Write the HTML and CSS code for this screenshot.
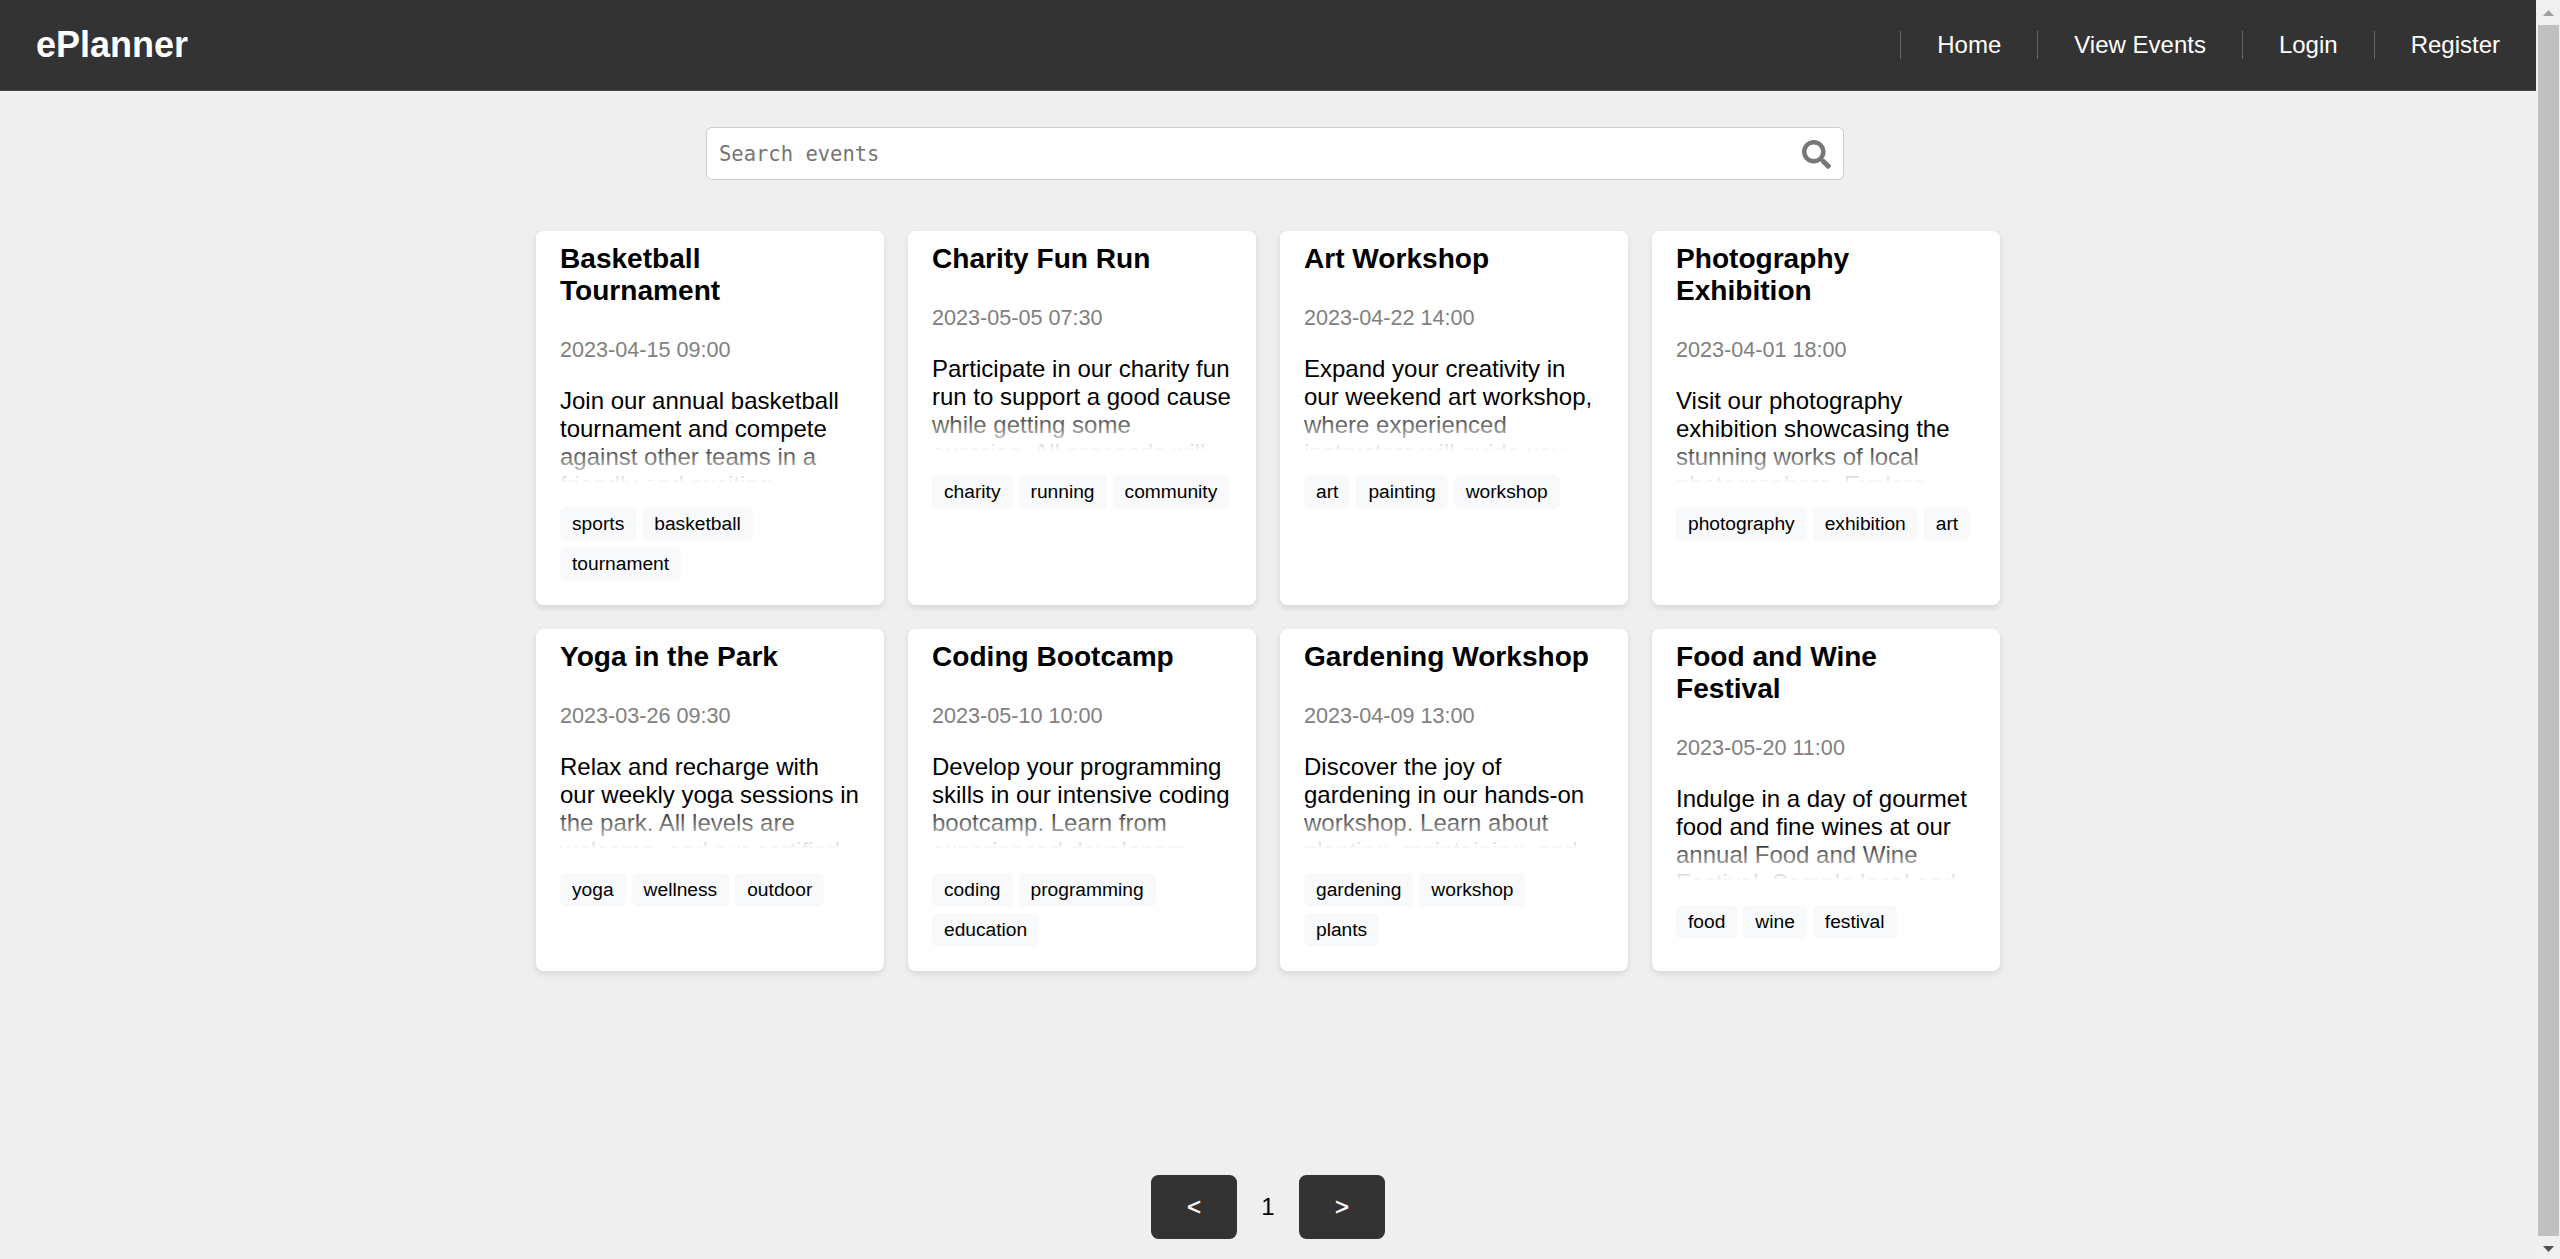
FILE: index.html
```html
<!DOCTYPE html>
<html lang="en">
<head>
<meta charset="utf-8">
<title>ePlanner</title>
<link rel="stylesheet" href="styles.css">
</head>
<body>
<div class="page">
  <header class="header">
    <h1 class="logo">ePlanner</h1>
    <nav class="nav">
      <a class="nav-link">Home</a>
      <a class="nav-link">View Events</a>
      <a class="nav-link">Login</a>
      <a class="nav-link">Register</a>
    </nav>
  </header>
  <main class="main">
    <div class="search">
      <input class="search-input" type="text" placeholder="Search events">
      <svg class="search-icon" viewBox="0 0 512 512"><path fill="currentColor" d="M505 442.700L405.300 343c-4.500-4.500-10.600-7-17-7H372c27.600-35.300 44-79.700 44-128C416 93.100 322.900 0 208 0S0 93.100 0 208s93.100 208 208 208c48.300 0 92.700-16.400 128-44v16.300c0 6.400 2.500 12.500 7 17l99.700 99.700c9.400 9.400 24.600 9.400 33.900 0l28.300-28.300c9.400-9.400 9.400-24.600.1-34zM208 336c-70.700 0-128-57.200-128-128 0-70.700 57.200-128 128-128 70.700 0 128 57.200 128 128 0 70.700-57.200 128-128 128z"/></svg>
    </div>
    <section class="events">
      <article class="card">
        <h3 class="title">Basketball Tournament</h3>
        <p class="date">2023-04-15 09:00</p>
        <p class="desc">Join our annual basketball tournament and compete against other teams in a friendly and exciting</p>
        <div class="tags"><span class="tag">sports</span><span class="tag">basketball</span><span class="tag">tournament</span></div>
      </article>
      <article class="card">
        <h3 class="title">Charity Fun Run</h3>
        <p class="date">2023-05-05 07:30</p>
        <p class="desc">Participate in our charity fun run to support a good cause while getting some exercise. All proceeds will</p>
        <div class="tags"><span class="tag">charity</span><span class="tag">running</span><span class="tag">community</span></div>
      </article>
      <article class="card">
        <h3 class="title">Art Workshop</h3>
        <p class="date">2023-04-22 14:00</p>
        <p class="desc">Expand your creativity in our weekend art workshop, where experienced instructors will guide you</p>
        <div class="tags"><span class="tag">art</span><span class="tag">painting</span><span class="tag">workshop</span></div>
      </article>
      <article class="card">
        <h3 class="title">Photography Exhibition</h3>
        <p class="date">2023-04-01 18:00</p>
        <p class="desc">Visit our photography exhibition showcasing the stunning works of local photographers. Explore</p>
        <div class="tags"><span class="tag">photography</span><span class="tag">exhibition</span><span class="tag">art</span></div>
      </article>
      <article class="card">
        <h3 class="title">Yoga in the Park</h3>
        <p class="date">2023-03-26 09:30</p>
        <p class="desc">Relax and recharge with our weekly yoga sessions in the park. All levels are welcome, and our certified</p>
        <div class="tags"><span class="tag">yoga</span><span class="tag">wellness</span><span class="tag">outdoor</span></div>
      </article>
      <article class="card">
        <h3 class="title">Coding Bootcamp</h3>
        <p class="date">2023-05-10 10:00</p>
        <p class="desc">Develop your programming skills in our intensive coding bootcamp. Learn from experienced developers</p>
        <div class="tags"><span class="tag">coding</span><span class="tag">programming</span><span class="tag">education</span></div>
      </article>
      <article class="card">
        <h3 class="title">Gardening Workshop</h3>
        <p class="date">2023-04-09 13:00</p>
        <p class="desc">Discover the joy of gardening in our hands-on workshop. Learn about planting, maintaining, and</p>
        <div class="tags"><span class="tag">gardening</span><span class="tag">workshop</span><span class="tag">plants</span></div>
      </article>
      <article class="card">
        <h3 class="title">Food and Wine Festival</h3>
        <p class="date">2023-05-20 11:00</p>
        <p class="desc">Indulge in a day of gourmet food and fine wines at our annual Food and Wine Festival. Sample local and</p>
        <div class="tags"><span class="tag">food</span><span class="tag">wine</span><span class="tag">festival</span></div>
      </article>
    </section>
    <div class="pagination">
      <button class="page-button">&lt;</button>
      <span class="page-number">1</span>
      <button class="page-button">&gt;</button>
    </div>
  </main>
</div>
<div class="scrollbar">
  <svg class="arrow arrow-up" viewBox="0 0 11 6"><path d="M5.500 0L11 6H0z"/></svg>
  <div class="thumb"></div>
  <svg class="arrow arrow-down" viewBox="0 0 11 6"><path d="M0 0h11L5.500 6z"/></svg>
</div>
</body>
</html>
```
FILE: styles.css
```css
* {
  box-sizing: border-box;
  margin: 0;
}

body {
  display: flex;
  height: 1259px;
  overflow: hidden;
  background: #efefef;
  color: #000;
  font: 24px/28px "Liberation Sans", Arial, sans-serif;
}

.page {
  display: flex;
  flex-direction: column;
  width: 2536px;
}

.header {
  display: flex;
  align-items: center;
  justify-content: space-between;
  height: 91px;
  padding-left: 36px;
  background: #333;
  border-bottom: 1px solid #444;
  color: #fff;
}

.logo {
  padding-bottom: 2px;
  font-size: 36px;
  line-height: 41px;
}

.nav {
  display: flex;
}

.nav-link {
  padding: 0 36px;
  border-left: 1px solid #666;
}

.main {
  display: flex;
  flex: 1;
  flex-direction: column;
  align-items: center;
  padding: 36px 0 20px;
}

.search {
  display: flex;
  align-items: center;
  width: 1138px;
  height: 53px;
  margin-left: 14px;
  padding: 0 12px;
  background: #fff;
  border: 1px solid #ccc;
  border-radius: 6px;
}

.search-input {
  flex: 1;
  padding: 0;
  background: none;
  border: 0;
  outline: 0;
  font: 20.5px "DejaVu Sans Mono", monospace;
}

.search-input::placeholder {
  color: #757575;
}

.search-icon {
  width: 29px;
  height: 29px;
  margin-top: 2px;
  color: #777;
}

.events {
  display: grid;
  grid-template-columns: repeat(4, 348px);
  gap: 24px;
  margin-top: 51px;
}

.card {
  padding: 12px 24px 24px;
  background: #fff;
  border-radius: 7.5px;
  box-shadow: 0 3px 6px rgba(0, 0, 0, 0.1);
}

.title {
  margin-bottom: 30px;
  font-size: 28.08px;
  line-height: 32px;
}

.date {
  margin-bottom: 25px;
  color: gray;
  font-size: 21.6px;
  line-height: 25px;
}

.desc {
  position: relative;
  height: 96px;
  margin-bottom: 24px;
  overflow: hidden;
}

.desc::after {
  content: "";
  position: absolute;
  inset: 50px 0 0;
  background: linear-gradient(rgba(255, 255, 255, 0), #fff);
}

.tags {
  display: flex;
  flex-wrap: wrap;
  gap: 6px;
}

.tag {
  padding: 6px 12px;
  background: #f8f9fa;
  border-radius: 6px;
  font-size: 19.2px;
  line-height: 22px;
}

.pagination {
  display: flex;
  align-items: center;
  gap: 24px;
  margin-top: auto;
}

.page-button {
  width: 86px;
  height: 64px;
  padding: 0;
  background: #333;
  border: 0;
  border-radius: 7.5px;
  color: #fff;
  font: inherit;
  -webkit-text-stroke: 0.4px #fff;
}

.page-number {
  width: 14px;
  text-align: center;
}

.scrollbar {
  display: flex;
  flex-direction: column;
  align-items: center;
  width: 24px;
  padding: 10px 0 7px 1px;
  background: #f0f0f0;
}

.arrow {
  width: 11px;
  height: 6px;
}

.arrow-up {
  fill: #a0a0a0;
}

.arrow-down {
  fill: #505050;
}

.thumb {
  flex: 1;
  width: 21px;
  margin: 9px 0 10px;
  background: #c0c0c0;
}
```
